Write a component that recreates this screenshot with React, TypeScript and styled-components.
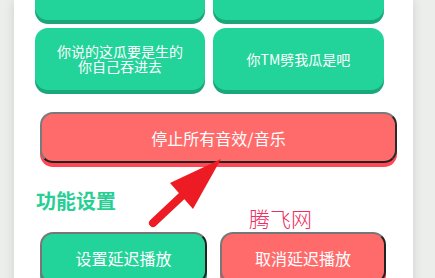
import { createGlobalStyle, styled } from "styled-components";

const GlobalStyle = createGlobalStyle`
  html, body {
    margin: 0;
    padding: 0;
    background: #eceeec;
    overflow: hidden;
  }
  body {
    font-family: "Noto Sans CJK SC", "Noto Sans", sans-serif;
  }
`;

const sounds = [
  ["", ""],
  ["你说的这瓜要是生的\n你自己吞进去", "你TM劈我瓜是吧"],
];

export default function App() {
  return (
    <>
      <GlobalStyle />
      <Panel>
        <SoundGrid>
          {sounds.flat().map((label, i) => (
            <SoundButton key={i}>{label}</SoundButton>
          ))}
        </SoundGrid>
        <Settings>
          <StopButton>停止所有音效/音乐</StopButton>
          <Heading>功能设置</Heading>
          <ActionRow>
            <ActionButton $tone="green">设置延迟播放</ActionButton>
            <ActionButton $tone="red">取消延迟播放</ActionButton>
          </ActionRow>
          <Arrow viewBox="145 156 80 72" width="80" height="72">
            <polygon points="221,159 170,183 193,209" fill="#ed1c24" />
            <line
              x1="186"
              y1="192"
              x2="153"
              y2="223"
              stroke="#ed1c24"
              strokeWidth="8"
              strokeLinecap="round"
            />
          </Arrow>
          <Watermark>腾飞网</Watermark>
        </Settings>
      </Panel>
    </>
  );
}

const Panel = styled.div`
  width: 399px;
  min-height: 300px;
  margin-left: 14px;
  background: #fff;
  box-shadow: 0 0 10px rgba(0, 0, 0, 0.12);
  padding-top: 1px;
`;

const SoundGrid = styled.div`
  display: grid;
  grid-template-columns: 170px 171px;
  gap: 8px;
  margin: -43px 0 0 21px;
`;

const SoundButton = styled.div`
  height: 62px;
  border-radius: 13px;
  background: #23d49a;
  box-shadow: 0 4px 0 #1aa87b;
  color: #fff;
  font-size: 14px;
  line-height: 15px;
  white-space: pre-line;
  display: flex;
  align-items: center;
  justify-content: center;
  text-align: center;
`;

const Settings = styled.div`
  position: relative;
  margin-top: 22px;
`;

const StopButton = styled.div`
  box-sizing: border-box;
  height: 51px;
  margin: 0 16px 0 26px;
  border: 2px solid;
  border-color: #7a7a7a #2a2a2a #222 #7a7a7a;
  border-radius: 13px;
  background: #ff6b6b;
  box-shadow: 0 4px 0 #ff4756;
  color: #fff;
  font-size: 16px;
  display: flex;
  align-items: center;
  justify-content: center;
`;

const Heading = styled.h2`
  margin: 26px 0 0 22px;
  font-size: 20px;
  line-height: 24px;
  font-weight: 700;
  color: #27cf94;
`;

const ActionRow = styled.div`
  display: grid;
  grid-template-columns: 167px 166px;
  gap: 13px;
  margin: 19px 0 0 26px;
`;

const ActionButton = styled.div<{ $tone: "green" | "red" }>`
  box-sizing: border-box;
  height: 52px;
  border: 2px solid;
  border-color: #777 #222 #222 #777;
  border-radius: 13px;
  background: ${(p) => (p.$tone === "green" ? "#23d49a" : "#ff6b6b")};
  box-shadow: 0 4px 0 ${(p) => (p.$tone === "green" ? "#1aa87b" : "#ff4756")};
  color: #fff;
  font-size: 16px;
  display: flex;
  align-items: center;
  justify-content: center;
`;

const Arrow = styled.svg`
  position: absolute;
  left: 131px;
  top: 44px;
`;

const Watermark = styled.span`
  position: absolute;
  left: 235px;
  top: 92px;
  font-size: 21px;
  font-weight: 300;
  color: #ee2d62;
  line-height: 28px;
`;
